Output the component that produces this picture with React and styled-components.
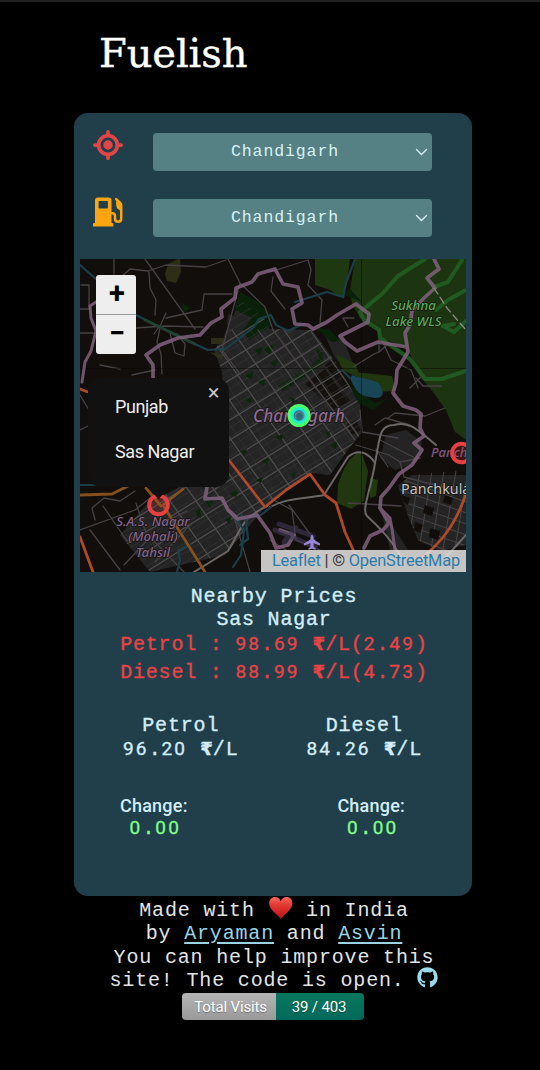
import React from "react";
import styled, { createGlobalStyle } from "styled-components";
import { FaGithub } from "react-icons/fa";
import { FaLocationCrosshairs } from "react-icons/fa6";

const Global = createGlobalStyle`
  * { box-sizing: border-box; }
  body { margin: 0; background: #000; }
`;

const typewriter = `"Liberation Mono", monospace`;
const sans = `Roboto, sans-serif`;

const Page = styled.main`
  display: flex;
  flex-direction: column;
  height: 1070px;
  border-top: 2px solid #202020;
  background: #000;
  overflow: hidden;
`;
const Title = styled.h1`
  margin: 26px 0 0 99px;
  height: 85px;
  font: 400 40px/51px "DejaVu Serif", serif;
  letter-spacing: -0.1px;
  -webkit-text-stroke: 0.4px #fff;
  color: #fff;
`;
const Card = styled.section`
  display: flex;
  flex-direction: column;
  width: 398px;
  height: 783px;
  margin-left: 74px;
  padding: 20px 6px 0;
  border-radius: 14px;
  background: #203f4a;
  flex: none;
`;
const Field = styled.div`
  display: flex;
  height: 38px;
  margin-bottom: ${(p) => p.$gap}px;
  padding-left: 13px;
`;
const IconSlot = styled.div`
  width: 60px;
  margin-top: ${(p) => p.$shift}px;
  color: ${(p) => p.$color};
  svg { display: block; width: 30px; height: 30px; }
`;
const Select = styled.div`
  display: flex;
  align-items: center;
  width: 279px;
  padding: 0 2px 0 78px;
  justify-content: space-between;
  border-radius: 4px;
  background: #558084;
  color: #d7f3f6;
  font: 400 16.5px/40px ${typewriter};
  letter-spacing: 0.9px;
`;
const MapBox = styled.div`
  position: relative;
  width: 386px;
  height: 313px;
  flex: none;
  overflow: hidden;
  background: #120e0b;
  > svg { display: block; }
`;
const ZoomControl = styled.div`
  position: absolute;
  left: 16px;
  top: 16px;
  width: 40px;
  border-radius: 3px;
  overflow: hidden;
  background: #eee;
`;
const ZoomButton = styled.div`
  display: flex;
  align-items: center;
  justify-content: center;
  height: ${(p) => (p.$divided ? 40 : 39)}px;
  border-bottom: ${(p) => (p.$divided ? "1px solid #999" : "0")};
  padding: 0 0 4px 2px;
  font: 700 29px/36px ${sans};
  color: #000;
`;
const Popup = styled.div`
  position: absolute;
  left: 8px;
  top: 119px;
  width: 141px;
  height: 109px;
  padding: 6px 0 0 27px;
  border-radius: 13px;
  background: #111;
  color: #eee;
  font: 400 18px/45px ${sans};
  letter-spacing: -0.42px;
`;
const PopupClose = styled.span`
  position: absolute;
  right: 10px;
  top: 3px;
  font: 400 22px/24px ${sans};
  color: #c4c4c4;
`;
const Attribution = styled.div`
  position: absolute;
  right: 0;
  bottom: 0;
  height: 22px;
  width: 205px;
  padding-left: 11px;
  background: rgba(224, 222, 222, 0.88);
  color: #333;
  white-space: nowrap;
  font: 400 16.4px/22px ${sans};
  letter-spacing: -0.21px;
  a { color: #2b7cab; }
`;
const Line = styled.div`
  height: ${(p) => p.$h}px;
  line-height: ${(p) => p.$h}px;
  color: ${(p) => p.$color || "#d3edf8"};
  white-space: pre;
`;
const Nearby = styled.div`
  margin-top: 13px;
  padding-left: 2px;
  text-align: center;
  font-family: ${typewriter};
  font-size: 20px;
  letter-spacing: 0.8px;
  -webkit-text-stroke: 0.35px currentColor;
`;
const Prices = styled.div`
  display: flex;
  justify-content: space-between;
  margin-top: 27px;
  padding: 0 44px 0 43px;
  text-align: center;
  font-family: ${typewriter};
  font-size: 20px;
  letter-spacing: 0.83px;
  -webkit-text-stroke: 0.35px currentColor;
`;
const Changes = styled.div`
  display: flex;
  justify-content: space-between;
  margin-top: 32px;
  padding: 0 61px 0 40px;
  text-align: center;
  font: 500 18px ${sans};
  letter-spacing: 0.22px;
`;
const ChangeValue = styled.div`
  height: 22px;
  padding-left: 3px;
  font: 400 20px/24px ${typewriter};
  letter-spacing: 0.9px;
  color: #81ff86;
  -webkit-text-stroke: 0.3px currentColor;
`;
const Digits = styled.span`
  font-family: Roboto, sans-serif;
  font-size: 19px;
  letter-spacing: 2.15px;
  line-height: 1;
`;
const Rupee = styled.span`
  font-family: "DejaVu Sans", sans-serif;
  font-weight: 700;
  font-size: 18px;
  display: inline-block;
  width: 12.83px;
  line-height: 1;
  letter-spacing: 0;
`;
const Footer = styled.footer`
  display: flex;
  flex-direction: column;
  align-items: center;
  width: 398px;
  margin: 3px 0 0 75px;
  font: 400 20px ${typewriter};
  letter-spacing: 0.83px;
  a { color: #9bd3e4; text-decoration: underline; text-decoration-thickness: 2px; text-underline-offset: 3px; }
`;
const Inline = styled.span`
  display: inline-block;
  width: ${(p) => p.$w}px;
  height: 14px;
  letter-spacing: 0;
  svg { display: block; margin-top: ${(p) => p.$lift}px; }
`;
const Badge = styled.div`
  display: flex;
  width: 182px;
  height: 27px;
  margin-right: 2px;
  border-radius: 4px;
  overflow: hidden;
  color: #fff;
  font: 400 15px/28px ${sans};
  letter-spacing: 0;
  text-align: center;
  text-shadow: 0 1px 1px rgba(0, 0, 0, 0.3);
`;
const BadgePart = styled.span`
  width: ${(p) => p.$w}px;
  padding-left: ${(p) => p.$pad || 0}px;
  padding-right: ${(p) => p.$trail || 0}px;
  letter-spacing: ${(p) => p.$track || 0}px;
  background: ${(p) => p.$bg};
`;

// Sets digit runs in an undotted face and keeps the typewriter pitch.
const Mono = ({ children }) =>
  children.split(/(\d+|₹)/).map((part, i) =>
    part === "₹" ? <Rupee key={i}>₹</Rupee> : /^\d+$/.test(part) ? <Digits key={i}>{part}</Digits> : part
  );

const Chevron = () => (
  <svg width="17" height="17" viewBox="0 0 17 17" fill="none" stroke="#d7f3f6" strokeWidth="1.4">
    <path d="M3.500 5.500l5 5 5-5" strokeLinecap="round" />
  </svg>
);

const FuelPump = () => (
  <svg viewBox="0 0 30 30" fill="none">
    <path fill="currentColor" fillRule="evenodd" d="M5 0.500H15.500A3 3 0 0 1 18.500 3.500V26H19.300A1 1 0 0 1 20.300 27V29.500H0V27A1 1 0 0 1 1 26H2V3.500A3 3 0 0 1 5 .5ZM6.300 4A.7.7 0 0 0 5.600 4.700V10.800A.7.7 0 0 0 6.300 11.500H14.200A.7.7 0 0 0 14.900 10.800V4.700A.7.7 0 0 0 14.200 4Z" />
    <path stroke="currentColor" strokeWidth="2.500" strokeLinecap="round" strokeLinejoin="round" d="M18.500 16.200H19.500Q22 16.200 22 19V21.500Q22 24.800 25.100 24.800Q28.200 24.800 28.200 21.500V8.500Q28.200 7 27.200 6L23.200 2.200" />
    <path fill="currentColor" d="M23 4L28.800 8V13.800Q23.200 12.500 23.200 8Z" />
  </svg>
);

const Heart = () => (
  <svg width="25.7" height="24" viewBox="0 0 25.7 24">
    <defs>
      <linearGradient id="heart" x1="0" y1="0" x2="0" y2="1">
        <stop offset="0" stopColor="#ff6a5c" />
        <stop offset=".35" stopColor="#e33b35" />
        <stop offset="1" stopColor="#b90f16" />
      </linearGradient>
    </defs>
    <path d="M12.8 23C9 17.5 1.2 14 1.2 7.2C1.2 3.6 3.8 1 7 1C9.8 1 12 2.8 12.8 5.4C13.6 2.8 15.8 1 18.6 1C21.8 1 24.4 3.6 24.4 7.2C24.4 14 16.6 17.5 12.8 23Z" fill="url(#heart)" />
  </svg>
);

const streets = (count, ox, oy, dx, dy, vx, vy) =>
  Array.from({ length: count }, (_, i) => `M${ox + dx * i} ${oy + dy * i}l${vx} ${vy}`).join("");

const City = "M222 372L214 350L223 338L240 300L263 316L270 329L312 330L338 365L360 405L362 432L348 450L330 475L310 473L264 508L225 555L150 572L120 535L146 505L228 460Z";

const MapDrawing = () => (
  <svg width="386" height="313" viewBox="80 259 386 313" fill="none" strokeLinejoin="round" strokeLinecap="round">
    <defs>
      <clipPath id="city"><path d={City} /></clipPath>
      <clipPath id="east"><path d="M398 485L412 475L466 470V545L440 551L418 540L408 516Z" /></clipPath>
      <radialGradient id="here">
        <stop offset="0" stopColor="#2f6470" />
        <stop offset=".4" stopColor="#2a7080" />
        <stop offset=".5" stopColor="#21e0e0" />
        <stop offset=".68" stopColor="#28f3b0" />
        <stop offset=".8" stopColor="#4dff69" />
        <stop offset="1" stopColor="#4dff69" />
      </radialGradient>
    </defs>
    <path fill="#120e0b" d="M80 259h386v313H80z" />

    {/* parks, forest and built-up ground */}
    <g fill="#242425">
      <path d={City} />
      <path d="M228 314l8 3-2 10-7-2z" />
      <path d="M386 435l20-5 16 12-5 20-22 8-15-12zM398 485l14-10h54v70l-26 6-22-11-10-24zM380 505l12 20 16 25h-18z" />
      <path d="M324 333l20 8 10 25-18-5z" />
    </g>
    <path fill="#1c3510" d="M355 259H466V440L455 432L446 410L433 392L419 375L407 347L380 338L376 327L360 318L352 304L350 290Z" />
    <path fill="#1e3812" d="M315 259H350L348 275L344 299L330 290L315 285Z" />
    <path fill="#20370f" d="M354 372l38 4 4 15-20 1zM338 485c4-15 12-30 23-34l7 20-4 30-13 8-14-6zM336 354l20 10 4 14-18-8zM370 478l8 2-2 16-6 2z" />
    <path fill="#0a2109" d="M240 292L257 301L271 314V326L249 340L243 330L252 318L234 309ZM314 327L330 330L340 341L332 342ZM350 289l12 13-20-8zM350 385L375 403L388 398L373 410L357 402Z" />
    <path fill="#0a2509" d="M182 303l8 5-7 5zM262 349l12-5-4 10zM278 386l28-16 15-13 5 5-25 17-18 12zM220 475h12l-6 7zM205 500h8l-3 8zM316 348l8 6-5 6z" />
    <path fill="#15110e" d="M305 384l20-15 25 32-16 8zM347 425l9-5 5 10-9 5zM325 365l10-8 18 27-9 6z" />
    <path fill="#2e2d17" d="M168 264l12-6 1 14-5 11-9-2-2-7zM211 338h13v6h-13zM210 352l14 3-3 5z" />
    <path fill="#194656" d="M352 375C362 380 381 378 382 390C385 396 379 400 370 397C358 397 353 385 350 378Z" />

    {/* residential street grid */}
    <g clipPath="url(#city)">
      <g stroke="#363536" strokeWidth="1">
        <path d={streets(32, 120, 360, 0, 9.7, 300, -186)} opacity=".7" />
        <path d={streets(28, 80, 330, 12.2, 0, 170, 250)} opacity=".55" />
      </g>
      <g stroke="#4d4b4c" strokeWidth="1.3">
        <path d={streets(17, 120, 408, 0, 20, 300, -186)} />
        <path d={streets(13, 50, 330, 26, 0, 165, 235)} />
      </g>
      <path fill="#0a2509" d="M254 350l9-3-3 8zM270 363l8-4-3 8zM245 376l8-4-1 7zM258 382l7-3-1 7zM290 397l5 2-2 5zM240 452l7-3-2 6zM262 461l7-3-2 6zM275 437l8-3-1 7zM325 433l5-2-1 6zM330 445l7-3-1 7zM290 475l6-3-2 6zM256 480l7-3-2 6zM230 494l8-4-2 7zM246 400l6-3-1 6zM196 511l4-2 1 9-4-2zM225 520l6-3-1 7z" />
    </g>
    <g clipPath="url(#east)" stroke="#454142" strokeWidth="1.1">
      <path d={streets(12, 375, 470, 0, 11, 100, 35)} />
      <path d={streets(10, 385, 465, 12, 0, -15, 90)} />
      <path fill="#100d0b" stroke="none" d="M402 495l8 3-2 7-5-3zM425 505l9 3-2 8-9-3zM415 522l8 3-3 8-6-3zM430 528l10 3-2 9-9-3zM445 495l8 3-2 7-8-3z" />
    </g>

    {/* outlying roads */}
    <g stroke="#474145" strokeWidth="1.3">
      <path d="M114 259V274M145 259L195 329M118 280l12-11 18 2 18-6 40 2 20-7M149 272l1 16 6 12-1 15M166 318L202 310L204 294H232M80 333h15M136 328l29-2 38 1M160 328l-3 14 4 12 1 20M170 333l5 20 9 3 1-12-8-10M166 313l-5 11-7 10M132 375l23-5M80 309h9v-24h-8M80 430l10-5M80 395l12 20M120 369l-20-4" />
      <path d="M228 259L240 283L265 307L273 330L355 440M240 283L222 350L240 374M270 272L308 260L311 270L308 285L322 300L320 323M273 277l-2 14 14 18M348 327l-5-9h11M382 340l9 20 20 10 7 18M353 367l21-13 5-2v-12M387 345l-8 7M416 378l7 8 18 0M410 388l12-12M388 418l7-5 30 3 20-8M356 445L389 455L400 462L420 458M362 432L398 438M360 410l2 20M375 425l10-7 25 7" />
      <path d="M80 530l55-20 24-19M95 520l-3-12 12-10 16 3 15-10M90 530l30 40M136 503l10 30 38 39M152 535l-28 30M103 506l24 35 60-30M190 525l-35 37M235 520l15 52M270 498L292 510L296 540L320 550M289 505L318 545M348 503L366 504M270 540l40 25M366 504l35 2M400 462l4 15 62 16M380 440l35 18M376 449l12 18" />
    </g>
    <g stroke="#6c6767" strokeWidth="2">
      <path d="M270 507C286 498 303 499 324 495L348 457C360 447 370 455 375 463C371 490 361 510 367 516C381 529 392 540 404 562" />
      <path d="M375 463C380 440 378 425 394 425C410 420 420 432 436 445M194 572L228 551C244 525 240 520 267 506M466 535l-20 22" />
    </g>
    <path stroke="#1b3e48" strokeWidth="2.2" d="M80 265l16 14M136 315l50 25 22 10 16-1M224 350l30-23 5-8 12-4 5 10 12 6 15-7M295 302l32-10 16 5 3-14 9-24M80 485h15M271 507l-10 8-15 4 2 20-8 6M242 515l-5 5 7 10-3 25-8 12M190 545l-12 5 2 10-3 12M350 378l-8-8" />
    <path stroke="#213f32" strokeWidth="3" d="M145 320l50 24" />
    <path d="M361.5 259V572M80 368.5H466" stroke="#080706" strokeWidth="1" opacity=".5" />

    {/* wildlife sanctuary edge */}
    <g stroke="#215f25" strokeWidth="4" opacity=".85">
      <path d="M425 259L398 276L382 294L360 312L364 320L379 330L380 338L410 359L425 379L442 379L466 371M434 287L448 282L462 260M436 310L448 300L466 290M443 326L454 332L466 321M443 326L454 324" />
    </g>

    {/* administrative borders */}
    <g stroke="#80617d" strokeWidth="3.700" opacity=".85">
      <path d="M153 378L153 365L146 355L160 345L178 338L200 335L211 323L222 317L221 309L235 298L236 288L252 282L258 274L275 269L283 284L298 287L302 303L292 309L295 324L308 325L313 329L327 322L337 315L356 304L369 314L368 322L340 336L345 342L357 351L378 342L407 347" />
      <path d="M434 259L439 269L427 278L435 288L424 298L412 311L410 325L405 333L408 352L397 370L396 383L393 393L403 406L416 410L421 414L420 428L424 436L414 443L422 450L412 465L399 474L389 488L381 497L380 508L389 523L383 530L370 536L364 548" />
      <path d="M380 508L390 518L392 529L395 550M96 302L90 306L91 318L96 331L91 351L85 362L82 382" strokeWidth="3" />
      <path d="M207 487L205 499L222 498L228 510L238 519L257 515L270 533L276 548L288 545L294 535L280 530" />
      <path d="M434 288l13 20 19 22" stroke="#9a9a91" strokeWidth="1.3" strokeDasharray="7 4" />
    </g>
    <path d="M275 530l40 17M279 524l34 12M284 542l12-14" stroke="#403857" strokeWidth="5" opacity=".6" />

    {/* highways */}
    <g strokeWidth="2.8">
      <path d="M80 389l8 3M228 459L265 507L286 490L310 474L325 495L336 503L345 532L356 556M466 494C454 528 440 543 421 559M80 537L93 572" stroke="#ad4a2a" />
      <path d="M80 495L112 494L128 486M183 489L163 505L205 572M146 488l15 18" stroke="#85501e" />
    </g>

    <path d="M312 535c1.2 0 1.6 2 1.6 4.6l6.4 4v1.8l-6.4-2.2v3.6l2 1.8v1.2l-3.6-1-3.6 1v-1.2l2-1.8v-3.6l-6.400 2.200v-1.800l6.400-4c0-2.600.4-4.600 1.600-4.600z" fill="#9985d8" />

    {/* place names */}
    <g fontFamily='"Noto Sans", sans-serif' textAnchor="middle" stroke="#17120f" strokeWidth="1.5" paintOrder="stroke" fontWeight="500">
      <g fontStyle="italic" fill="#58ab5b" fontSize="13.3">
        <text x="413.500" y="309.500">Sukhna</text><text x="413.500" y="325.500">Lake WLS</text>
      </g>
      <g fontStyle="italic" fill="#836488" fontSize="13.3">
        <text x="153" y="525.500">S.A.S. Nagar</text><text x="153" y="541">(Mohali)</text><text x="153" y="556.500">Tahsil</text>
      </g>
      <text x="299" y="422" fontStyle="italic" fontSize="17.2" fill="#8f6b91">Chandigarh</text>
      <text x="431" y="457" textAnchor="start" fontStyle="italic" fontSize="13" fill="#7d5680">Panchkula</text>
      <text x="401" y="494" textAnchor="start" fontSize="14.3" fontWeight="400" fill="#c4c4c4">Panchkula</text>
    </g>

    <circle cx="299" cy="415.500" r="11.500" fill="url(#here)" />
    <path d="M296 418a4 4 0 1 1 6 1" stroke="#5d8290" strokeWidth="1.5" />
    <g stroke="#e64043" strokeWidth="4"><circle cx="158.500" cy="505" r="9.300" fill="#d83c32" fillOpacity=".2" /><circle cx="461.500" cy="453" r="9.300" fill="#d83c32" fillOpacity=".2" /></g>
    <path d="M143 483h31L158.500 499Z" fill="#111" />
  </svg>
);

const Price = ({ name, value }) => (
  <div>
    <Line $h={24}>{name}</Line>
    <Line $h={24}><Mono>{value}</Mono></Line>
  </div>
);

const Change = () => (
  <div>
    <Line $h={23}>Change:</Line>
    <ChangeValue><Mono>0.00</Mono></ChangeValue>
  </div>
);

export default function App() {
  return (
    <Page>
      <Global />
      <Title>Fuelish</Title>
      <Card>
        <Field $gap={28}>
          <IconSlot $color="#e04548" $shift={-3}><FaLocationCrosshairs /></IconSlot>
          <Select>Chandigarh<Chevron /></Select>
        </Field>
        <Field $gap={22}>
          <IconSlot $color="#fca510" $shift={-2}><FuelPump /></IconSlot>
          <Select>Chandigarh<Chevron /></Select>
        </Field>
        <MapBox>
          <MapDrawing />
          <ZoomControl>
            <ZoomButton $divided>+</ZoomButton>
            <ZoomButton>−</ZoomButton>
          </ZoomControl>
          <Popup>
            <PopupClose>×</PopupClose>
            <div>Punjab</div>
            <div>Sas Nagar</div>
          </Popup>
          <Attribution><a>Leaflet</a> | © <a>OpenStreetMap</a></Attribution>
        </MapBox>
        <Nearby>
          <Line $h={23}>Nearby Prices</Line>
          <Line $h={23}>Sas Nagar</Line>
          <Line $h={28} $color="#ea4345"><Mono>Petrol : 98.69 ₹/L(2.49)</Mono></Line>
          <Line $h={28} $color="#ea4345"><Mono>Diesel : 88.99 ₹/L(4.73)</Mono></Line>
        </Nearby>
        <Prices>
          <Price name="Petrol" value="96.20 ₹/L" />
          <Price name="Diesel" value="84.26 ₹/L" />
        </Prices>
        <Changes>
          <Change />
          <Change />
        </Changes>
      </Card>
      <Footer>
        <Line $h={23} $color="#e4e4e4">Made with <Inline $w={25.7} $lift={-6}><Heart /></Inline> in India</Line>
        <Line $h={24} $color="#e4e4e4">by <a>Aryaman</a> and <a>Asvin</a></Line>
        <Line $h={23} $color="#e4e4e4">You can help improve this</Line>
        <Line $h={24} $color="#e4e4e4">site! The code is open. <Inline $w={21} $lift={-5}><FaGithub size={21} color="#9bdcec" /></Inline></Line>
        <Badge>
          <BadgePart $w={94} $pad={3} $track={-0.15} $bg="linear-gradient(#b5b5b5, #999)">Total Visits</BadgePart>
          <BadgePart $w={88} $trail={2} $track={-0.15} $bg="linear-gradient(#08775f, #04695a)">39 / 403</BadgePart>
        </Badge>
      </Footer>
    </Page>
  );
}
